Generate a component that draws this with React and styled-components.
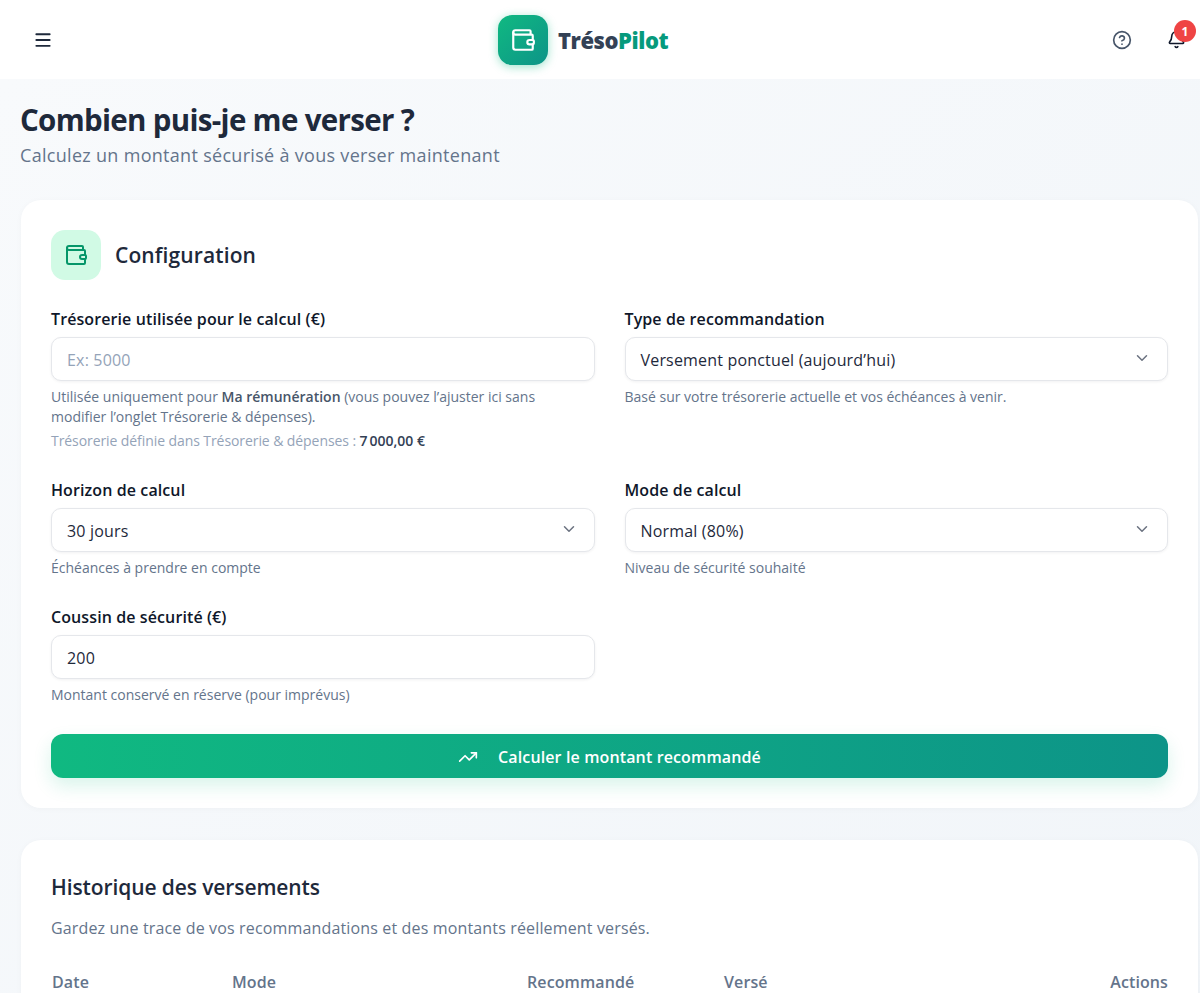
import React from 'react';
import styled, { createGlobalStyle } from 'styled-components';
import { Menu, CircleHelp, Bell, Wallet, ChevronDown, TrendingUp } from 'lucide-react';

const Global = createGlobalStyle`
  html, body { margin: 0; padding: 0; }
  body {
    height: 993px; overflow: hidden; background: #f6f8fb;
    font-family: "Open Sans", "Noto Sans", "Liberation Sans", sans-serif;
    color: #1e293b;
  }
  * { box-sizing: border-box; }
`;

const Page = styled.div`height: 993px; overflow: hidden; display: flex; flex-direction: column;`;
const Header = styled.header`
  height: 79px; flex: none; background: #fff; display: grid;
  grid-template-columns: 465px auto 1fr; align-items: center; padding: 0 14px 0 33px;
`;
const IconButton = styled.span`display: inline-flex; color: ${p => p.$color || '#1e293b'};`;
const Brand = styled.div`display: flex; align-items: center; gap: 10px;`;
const LogoTile = styled.div`
  width: 50px; height: 50px; border-radius: 14px; color: #fff;
  background: linear-gradient(135deg, #10b981, #0d9488);
  box-shadow: 0 2px 10px rgba(16,185,129,.4);
  display: flex; align-items: center; justify-content: center;
`;
const BrandName = styled.span`font-size: 22px; font-weight: 800; letter-spacing: -.45px; color: #334155;`;
const BrandAccent = styled.span`color: #069a7c;`;
const HeaderActions = styled.div`display: flex; justify-content: flex-end; align-items: center; gap: 35px;`;
const BellWrap = styled.span`position: relative; display: inline-flex; color: #0f172a;`;
const Badge = styled.span`
  position: absolute; top: -10px; right: -10px; width: 22px; height: 22px; border-radius: 50%;
  background: #ef4444; color: #fff; font-size: 12px; font-weight: 700;
  display: flex; align-items: center; justify-content: center;
`;
const Main = styled.main`
  flex: 1; padding: 22px 2px 0 20px;
  background: linear-gradient(135deg, #f8fafc, #f1f5f9);
`;
const Title = styled.h1`margin: 0; font-size: 29.5px; line-height: 38px; font-weight: 700; letter-spacing: -.68px; color: #1e293b;`;
const Subtitle = styled.p`margin: 3px 0 0; font-size: 18px; line-height: 27px; letter-spacing: .3px; color: #64748b;`;
const Card = styled.section`
  background: #fff; border-radius: 20px; padding: 30px;
  margin: ${p => p.$top}px 0 0 1px;
  box-shadow: 0 1px 6px rgba(15,23,42,.03);
`;
const CardHead = styled.div`display: flex; align-items: center; gap: 14px; margin-bottom: 27px;`;
const HeadIcon = styled.div`
  width: 50px; height: 50px; border-radius: 14px; background: #d1fae5; color: #059669;
  display: flex; align-items: center; justify-content: center;
`;
const ConfigTitle = styled.h2`margin: 0; font-size: 21px; line-height: 30px; font-weight: 600; letter-spacing: .12px; color: #1e293b;`;
const HistoryTitle = styled.h2`margin: 2px 0 0; font-size: 21px; line-height: 30px; font-weight: 600; letter-spacing: -.1px; color: #1e293b;`;
const Grid = styled.div`display: grid; grid-template-columns: 1fr 1fr; column-gap: 30px;`;
const Field = styled.div`display: flex; flex-direction: column; min-height: ${p => p.$h}px;`;
const Label = styled.label`font-size: 16px; line-height: 24px; font-weight: 600; letter-spacing: .1px; color: #0f172a; margin-bottom: 6px;`;
const Control = styled.div`
  height: 44px; border: 1px solid #e5e7eb; border-radius: 10px; background: #fff;
  box-shadow: 0 1px 3px rgba(15,23,42,.06);
  display: flex; align-items: center; justify-content: space-between; padding: 2px 16px 0 15px;
  font-size: 16px; letter-spacing: .18px; color: ${p => p.$muted ? '#94a3b8' : '#1e293b'};
`;
const Chevron = styled(ChevronDown)`width: 18px; height: 18px; color: #6b7280; margin-top: -4px;`;
const Help = styled.p`margin: 6px 0 0; font-size: 14px; line-height: 20px; color: #64748b; padding-right: ${p => p.$inset || 0}px;`;
const SubHelp = styled.p`margin: 4px 0 0; font-size: 14px; line-height: 20px; letter-spacing: -.08px; color: #94a3b8;`;
const Strong = styled.strong`font-weight: 600; color: #475569;`;
const Amount = styled.strong`font-weight: 600; letter-spacing: 0; color: #334155;`;
const CalcButton = styled.button`
  width: 100%; height: 44px; margin-top: 29px; border: 0; padding: 1px 0 0; border-radius: 12px; color: #fff;
  background: linear-gradient(90deg, #10b981, #0d9488);
  box-shadow: 0 8px 18px rgba(16,185,129,.16);
  display: flex; align-items: center; justify-content: center; gap: 20px;
  font: 600 16px "Open Sans", "Noto Sans", sans-serif; letter-spacing: .13px;
`;
const HistoryDesc = styled.p`margin: 14px 0 0; font-size: 16px; line-height: 24px; letter-spacing: .15px; color: #64748b;`;
const TableHead = styled.div`
  display: grid; grid-template-columns: 180px 295px 197px 1fr auto; margin: 30px 0 0 1px;
  font-size: 16px; line-height: 24px; font-weight: 600; letter-spacing: .1px; color: #64748b;
`;

const App = () => (
  <Page>
    <Global />
    <Header>
      <IconButton><Menu size={20} strokeWidth={2.3} /></IconButton>
      <Brand>
        <LogoTile><Wallet size={26} strokeWidth={2} /></LogoTile>
        <BrandName>Tréso<BrandAccent>Pilot</BrandAccent></BrandName>
      </Brand>
      <HeaderActions>
        <IconButton $color="#475569"><CircleHelp size={20} strokeWidth={2} /></IconButton>
        <BellWrap><Bell size={19} strokeWidth={2} /><Badge>1</Badge></BellWrap>
      </HeaderActions>
    </Header>
    <Main>
      <Title>Combien puis-je me verser ?</Title>
      <Subtitle>Calculez un montant sécurisé à vous verser maintenant</Subtitle>
      <Card $top={31}>
        <CardHead>
          <HeadIcon><Wallet size={24} strokeWidth={2} /></HeadIcon>
          <ConfigTitle>Configuration</ConfigTitle>
        </CardHead>
        <Grid>
          <Field $h={171}>
            <Label>Trésorerie utilisée pour le calcul (€)</Label>
            <Control $muted>Ex: 5000</Control>
            <Help $inset={40}>Utilisée uniquement pour <Strong>Ma rémunération</Strong> (vous pouvez l’ajuster ici sans modifier l’onglet Trésorerie &amp; dépenses).</Help>
            <SubHelp>Trésorerie définie dans Trésorerie &amp; dépenses : <Amount>7{'\u202f'}000,00 €</Amount></SubHelp>
          </Field>
          <Field $h={171}>
            <Label>Type de recommandation</Label>
            <Control>Versement ponctuel (aujourd’hui)<Chevron /></Control>
            <Help>Basé sur votre trésorerie actuelle et vos échéances à venir.</Help>
          </Field>
          <Field $h={127}>
            <Label>Horizon de calcul</Label>
            <Control>30 jours<Chevron /></Control>
            <Help>Échéances à prendre en compte</Help>
          </Field>
          <Field $h={127}>
            <Label>Mode de calcul</Label>
            <Control>Normal (80%)<Chevron /></Control>
            <Help>Niveau de sécurité souhaité</Help>
          </Field>
          <Field>
            <Label>Coussin de sécurité (€)</Label>
            <Control>200</Control>
            <Help>Montant conservé en réserve (pour imprévus)</Help>
          </Field>
        </Grid>
        <CalcButton><TrendingUp size={20} />Calculer le montant recommandé</CalcButton>
      </Card>
      <Card $top={32}>
        <HistoryTitle>Historique des versements</HistoryTitle>
        <HistoryDesc>Gardez une trace de vos recommandations et des montants réellement versés.</HistoryDesc>
        <TableHead><span>Date</span><span>Mode</span><span>Recommandé</span><span>Versé</span><span>Actions</span></TableHead>
      </Card>
    </Main>
  </Page>
);
export default App;
